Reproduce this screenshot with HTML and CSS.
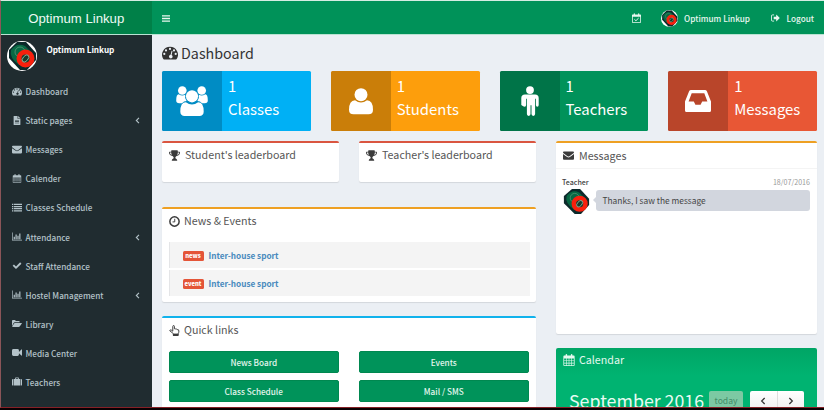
FILE: index.html
```html
<!DOCTYPE html>
<html lang="en">
<head>
<meta charset="utf-8">
<title>Optimum Linkup</title>
<link rel="stylesheet" href="styles.css">
</head>
<body>
<svg class="sprite" aria-hidden="true">
  <symbol id="gauge" viewBox="0 0 16 14"><path fill-rule="evenodd" d="M8 .8a8 8 0 0 0-6.700 12.300q.2.4.7.4h12q.5 0 .7-.4A8 8 0 0 0 8 .8zM3.400 7.900a1.100 1.100 0 1 1-2.200 0 1.100 1.100 0 0 1 2.200 0zM5.100 4.400a1.100 1.100 0 1 1-2.200 0 1.100 1.100 0 0 1 2.200 0zM9.100 2.900a1.100 1.100 0 1 1-2.200 0 1.100 1.100 0 0 1 2.200 0zM13.100 4.400a1.100 1.100 0 1 1-2.200 0 1.100 1.100 0 0 1 2.200 0zM14.800 7.900a1.100 1.100 0 1 1-2.200 0 1.100 1.100 0 0 1 2.200 0zM9.600 4.800l.9.3-.9 3.900a1.800 1.800 0 1 1-1-.2z"/></symbol>
  <symbol id="file" viewBox="0 0 14 16"><path fill-rule="evenodd" d="M1.500 0H8v5h5v10q0 1-1 1H2q-1 0-1-1V.5zM9 0l4 4H9zM3.500 7v1h7V7zm0 2.500v1h7v-1zm0 2.500v1h7v-1z"/></symbol>
  <symbol id="mail" viewBox="0 0 16 14"><path d="M0 2.200Q0 1 1.300 1h13.400Q16 1 16 2.200q0 1.100-1.300 2L9.400 8q-1.400 1-2.800 0L1.300 4.200Q0 3.300 0 2.200z"/><path d="M0 4.900l6 4.200q2 1.300 4 0l6-4.200v7q0 1.300-1.300 1.300H1.300Q0 13.200 0 11.900z"/></symbol>
  <symbol id="cal" viewBox="0 0 15 16"><path fill-rule="evenodd" d="M1.200 2H3V1q0-1 1-1t1 1v1h5V1q0-1 1-1t1 1v1h1.800q1.200 0 1.200 1.200v11.600q0 1.200-1.200 1.200H1.200Q0 16 0 14.800V3.200Q0 2 1.200 2zM1 6v2.500h2.500V6zm3.300 0v2.500H7.100V6zm3.600 0v2.500h2.800V6zm3.600 0v2.500H14V6zM1 9.200v2.600h2.500V9.200zm3.300 0v2.600h2.800V9.200zm3.600 0v2.600h2.800V9.200zm3.600 0v2.600H14V9.200zM1 12.600V15h2.500v-2.400zm3.300 0V15h2.800v-2.400zm3.600 0V15h2.800v-2.400zm3.600 0V15H14v-2.400z"/></symbol>
  <symbol id="list" viewBox="0 0 16 14"><path d="M0 1h2.200v2H0zm3.200 0H16v2H3.200zM0 4.400h2.200v2H0zm3.200 0H16v2H3.200zM0 7.800h2.200v2H0zm3.200 0H16v2H3.200zM0 11.200h2.200v2H0zm3.200 0H16v2H3.200z"/></symbol>
  <symbol id="chart" viewBox="0 0 18 14"><path d="M0 0h1.200v12.800H18V14H0zM3 7.500h2.200V12H3zm3.300-4h2.200V12H6.300zm3.400 2h2.200V12H9.700zM13 1.500h2.200V12H13z"/></symbol>
  <symbol id="check" viewBox="0 0 16 14"><path d="M1 7.300l2.100-2.100 3.300 3.300L13 1.900 15.100 4l-8.700 8.700z"/></symbol>
  <symbol id="folder" viewBox="0 0 17 14"><path d="M0 11.500V2.600Q0 1 1.500 1h3.200q1.500 0 1.500 1.600h5.300q1.600 0 1.600 1.700V5H5Q3.500 5 2.400 6.600z"/><path d="M4.900 6.200h11.300q1.100 0 .5 1l-3.300 4.600q-.8 1.200-2 1.200H1.100q-1.200 0-.4-1.200l2.500-4.400q.7-1.200 1.700-1.200z"/></symbol>
  <symbol id="video" viewBox="0 0 16 14"><path d="M2.300 1.500h6.500q2.300 0 2.300 2.300V6L15 2.200q1-.7 1 .5v8.600q0 1.200-1 .5L11.100 8v2.200q0 2.300-2.300 2.300H2.300Q0 12.500 0 10.200V3.800q0-2.300 2.300-2.300z"/></symbol>
  <symbol id="case" viewBox="0 0 16 14"><path fill-rule="evenodd" d="M3.200 3h1.700V1.600Q4.900.5 6 .5h4q1.100 0 1.100 1.100V3h1.700v10.500H3.200zm3-1.300V3h3.600V1.700zM2.300 3v10.500h-.8Q0 13.500 0 12V4.600Q0 3 1.500 3zm11.400 0h.8Q16 3 16 4.600V12q0 1.500-1.500 1.500h-.8z"/></symbol>
  <symbol id="angle" viewBox="0 0 8 12"><path d="M6.500 1.500L2 6l4.500 4.500" fill="none" stroke="currentColor" stroke-width="1.900"/></symbol>
  <symbol id="bars" viewBox="0 0 14 12"><path d="M0 .5h14v2.200H0zm0 4.400h14v2.200H0zm0 4.400h14v2.200H0z"/></symbol>
  <symbol id="calcheck" viewBox="0 0 14 15"><path fill-rule="evenodd" d="M1 2h1.700V.8q0-.8.9-.8t.9.8V2h5V.8q0-.8.9-.8t.9.8V2H13q1 0 1 1v11q0 1-1 1H1q-1 0-1-1V3q0-1 1-1zm.2 3.500v8.300h11.600V5.500z"/><path d="M3.700 9.500l2.400 2.300 4.300-4.300" fill="none" stroke="currentColor" stroke-width="1.500"/></symbol>
  <symbol id="out" viewBox="0 0 16 14"><path d="M5.500 1.500H2.700Q.8 1.500.8 3.400v7.200q0 1.900 1.900 1.900h2.800" fill="none" stroke="currentColor" stroke-width="1.600"/><path d="M4.800 4.600h4.400V1.700q0-.8.7-.3l5.300 5.100q.5.500 0 1l-5.300 5.100q-.7.500-.7-.3V9.400H4.800z"/></symbol>
  <symbol id="users" viewBox="0 0 32 30"><circle cx="6.300" cy="4.500" r="4.300"/><circle cx="25.700" cy="4.500" r="4.300"/><path d="M9.200 8.700q-.8 3.400 1.400 6.300-2.800.1-4.600 2.300H3.300Q.2 17.300.2 14.500q0-6.200 2.500-6.200 3.500 2.200 6.500.4zM22.800 8.700q.8 3.400-1.400 6.300 2.800.1 4.600 2.300h2.700q3.100 0 3.100-2.800 0-6.200-2.500-6.200-3.500 2.200-6.500.4z"/><circle cx="16" cy="10.300" r="6.100"/><path d="M9.900 16.200q6.100 4.500 12.200 0 5.600 0 5.600 9.400 0 4.400-4.400 4.400H8.700q-4.400 0-4.400-4.400 0-9.400 5.600-9.400z"/></symbol>
  <symbol id="user" viewBox="0 0 24 27"><circle cx="12" cy="6.700" r="6.500"/><path d="M6 12.200q6 4.500 12 0 6 .3 6 9.500 0 4.600-4.500 4.600h-15Q0 26.300 0 21.700q0-9.200 6-9.500z"/></symbol>
  <symbol id="male" viewBox="0 0 18 30"><circle cx="9" cy="4.100" r="3.900"/><path d="M4 8.400h10q3.700 0 3.700 3.700v7q0 1.600-1.400 1.600t-1.400-1.600v-6.300h-.8v15.300q0 1.800-1.800 1.800t-1.800-1.800v-8.900h-1v8.900q0 1.800-1.800 1.800t-1.800-1.800V12.800h-.8v6.300q0 1.600-1.400 1.600T.3 19.100v-7Q.3 8.400 4 8.400z"/></symbol>
  <symbol id="inbox" viewBox="0 0 26 22"><path fill-rule="evenodd" d="M6 0h14q1.300 0 1.900 1.300L26 11.500V20.500Q26 22 24.500 22h-23Q0 22 0 20.500v-9L4.100 1.300Q4.700 0 6 0zm.7 3.300L3.600 11.500h5.200l1.600 3.300h5.200l1.600-3.300h5.200L19.300 3.300z"/></symbol>
  <symbol id="trophy" viewBox="0 0 16 15"><path fill-rule="evenodd" d="M4 0h8q.8 0 .8.800V2h2.400q.8 0 .8.800 0 4.800-5 5.500-1.500 1.400-1.700 1.700-.5 2 1 2.300 1.700.5 1.700 2.700H4q0-2.200 1.700-2.700 1.500-.3 1-2.300Q6.500 9.700 5 8.300 0 7.600 0 2.800 0 2 .8 2h2.400V.8Q3.200 0 4 0zM1.200 3.200q.2 2.900 3 3.700-.9-1.500-1-3.700zm13.600 0h-2q-.1 2.200-1 3.700 2.800-.8 3-3.700z"/></symbol>
  <symbol id="clock" viewBox="0 0 14 14"><circle cx="7" cy="7" r="5.900" fill="none" stroke="currentColor" stroke-width="1.900"/><path d="M7.300 3.500v4H4.500" fill="none" stroke="currentColor" stroke-width="1.200"/></symbol>
  <symbol id="hand" viewBox="0 0 15 16"><path d="M5 9V2.300Q5 .8 6.200.8t1.200 1.500V5.500q1.300-.5 2 .5 1.300-.4 2 .6 2.500-.4 2.500 2.200 0 2-1 3.900v2.500H5.800v-2.500Q4.300 11 1.200 9 .2 8 1.200 7.200 2.500 6.600 5 9z" fill="none" stroke="currentColor" stroke-width="1.400"/><path d="M5.500 12.500h7.400V16H5.500z"/></symbol>
  <symbol id="logo" viewBox="0 0 30 30"><circle class="disc" cx="15" cy="15" r="15"/><path d="M10 1h9l10 11v7L20 29h-7L2 17V9z" fill="#0c2a2b"/><path d="M4 9q6-8 14-4l6 6-12 13Q2 17 4 9z" fill="#086844"/><circle cx="13" cy="11" r="5" fill="none" stroke="#62a080" stroke-width=".7"/><circle cx="18.500" cy="17.500" r="6.500" fill="#163c2c" stroke="#f8200d" stroke-width="5"/><ellipse cx="18.500" cy="17.500" rx="2.500" ry="4.200" transform="rotate(40 18.500 17.500)" fill="none" stroke="#8fb49d" stroke-width=".9"/></symbol>
  <symbol id="logo-plain" viewBox="0 0 30 30"><path d="M10 1h9l10 11v7L20 29h-7L1 17V9z" fill="#0c2a2b"/><path d="M4 9q6-8 14-4l6 6-12 13Q2 17 4 9z" fill="#086844"/><circle cx="13" cy="11" r="5" fill="none" stroke="#62a080" stroke-width=".7"/><circle cx="18.500" cy="17.500" r="6.500" fill="#163c2c" stroke="#f8200d" stroke-width="5"/><ellipse cx="18.500" cy="17.500" rx="2.500" ry="4.200" transform="rotate(40 18.500 17.500)" fill="none" stroke="#8fb49d" stroke-width=".9"/></symbol>
</svg>
<div class="screen">
  <header class="topbar">
    <div class="brand">Optimum Linkup</div>
    <nav class="topnav">
      <svg class="i-bars"><use href="#bars"/></svg>
      <svg class="i-calcheck"><use href="#calcheck"/></svg>
      <svg class="avatar-sm"><use href="#logo"/></svg>
      <span class="top-user">Optimum Linkup</span>
      <svg class="i-out"><use href="#out"/></svg>
      <span class="top-logout">Logout</span>
    </nav>
  </header>
  <div class="body">
    <aside class="sidebar">
      <div class="profile"><svg><use href="#logo"/></svg><span>Optimum Linkup</span></div>
      <ul class="menu">
        <li><svg><use href="#gauge"/></svg><span>Dashboard</span></li>
        <li><svg><use href="#file"/></svg><span>Static pages</span><svg class="angle"><use href="#angle"/></svg></li>
        <li><svg><use href="#mail"/></svg><span>Messages</span></li>
        <li><svg><use href="#cal"/></svg><span>Calender</span></li>
        <li><svg><use href="#list"/></svg><span>Classes Schedule</span></li>
        <li><svg><use href="#chart"/></svg><span>Attendance</span><svg class="angle"><use href="#angle"/></svg></li>
        <li><svg><use href="#check"/></svg><span>Staff Attendance</span></li>
        <li><svg><use href="#chart"/></svg><span>Hostel Management</span><svg class="angle"><use href="#angle"/></svg></li>
        <li><svg><use href="#folder"/></svg><span>Library</span></li>
        <li><svg><use href="#video"/></svg><span>Media Center</span></li>
        <li><svg><use href="#case"/></svg><span>Teachers</span></li>
      </ul>
    </aside>
    <main class="content">
      <h1><svg><use href="#gauge"/></svg><span>Dashboard</span></h1>
      <section class="stats">
        <div class="stat blue"><div class="stat-icon"><svg class="s-users"><use href="#users"/></svg></div><div class="stat-text"><b>1</b><b>Classes</b></div></div>
        <div class="stat orange"><div class="stat-icon"><svg class="s-user"><use href="#user"/></svg></div><div class="stat-text"><b>1</b><b>Students</b></div></div>
        <div class="stat green"><div class="stat-icon"><svg class="s-male"><use href="#male"/></svg></div><div class="stat-text"><b>1</b><b>Teachers</b></div></div>
        <div class="stat red"><div class="stat-icon"><svg class="s-inbox"><use href="#inbox"/></svg></div><div class="stat-text"><b>1</b><b>Messages</b></div></div>
      </section>
      <div class="columns">
        <div class="left">
          <div class="boards">
            <section class="box danger"><h2><svg><use href="#trophy"/></svg><span>Student's leaderboard</span></h2></section>
            <section class="box danger"><h2><svg><use href="#trophy"/></svg><span>Teacher's leaderboard</span></h2></section>
          </div>
          <section class="box warning news">
            <h2><svg><use href="#clock"/></svg><span>News &amp; Events</span></h2>
            <ul>
              <li><em>news</em><a>Inter-house sport</a></li>
              <li><em>event</em><a>Inter-house sport</a></li>
            </ul>
          </section>
          <section class="box info quick">
            <h2><svg><use href="#hand"/></svg><span>Quick links</span></h2>
            <div class="links"><a>News Board</a><a>Events</a><a>Class Schedule</a><a>Mail / SMS</a></div>
          </section>
        </div>
        <div class="right">
          <section class="box warning messages">
            <h2><svg><use href="#mail"/></svg><span>Messages</span></h2>
            <div class="meta"><strong>Teacher</strong><time>18/07/2016</time></div>
            <div class="chat"><svg><use href="#logo-plain"/></svg><p>Thanks, I saw the message</p></div>
          </section>
          <section class="calendar">
            <h2><svg><use href="#cal"/></svg><span>Calendar</span></h2>
            <div class="cal-bar">
              <span class="month">September 2016</span>
              <span class="today">today</span>
              <span class="pager"><i><svg><use href="#angle"/></svg></i><i><svg class="flip"><use href="#angle"/></svg></i></span>
            </div>
          </section>
        </div>
      </div>
    </main>
  </div>
</div>
</body>
</html>
```
FILE: styles.css
```css
* { box-sizing: border-box; margin: 0; padding: 0; }
body {
  width: 824px; height: 410px; overflow: hidden; background: #080002;
  font-family: "Noto Sans CJK SC", "Open Sans", sans-serif; color: #444;
}
svg { fill: currentColor; flex: none; display: block; }
.sprite { position: absolute; width: 0; height: 0; }
.disc { fill: #fff; }
ul { list-style: none; }
.screen {
  height: 408px; overflow: hidden; display: flex; flex-direction: column;
  border-top: 1px solid #d5ede3; border-left: 1px solid #8b5558; border-bottom: 1px solid #862026;
}
.topbar { height: 34px; flex: none; display: flex; color: #e9f7f0; border-bottom: 1px solid #b9e3d2; background: #009259; }
.brand {
  width: 151px; background: #008048; color: #eefaf5; text-align: center; padding-top: 1px;
  font: 13.200px/33px "Liberation Sans", Arial, sans-serif;
}
.topnav { flex: 1; display: flex; align-items: center; padding: 1px 10px 0; font-size: 8.200px; line-height: 12px; font-weight: 500; }
.i-bars { width: 8px; height: 7px; }
.i-calcheck { width: 9px; height: 10px; margin-left: 462px; }
.avatar-sm { width: 17px; height: 17px; margin-left: 20px; }
.top-user { width: 66px; margin-left: 6.500px; white-space: nowrap; }
.i-out { width: 9px; height: 8px; margin-left: 20.500px; }
.top-logout { margin-left: 7px; white-space: nowrap; }

.body { flex: 1; min-height: 0; display: flex; }
.sidebar { width: 151px; background: #202c30; color: #b4c3c9; flex: none; }
.profile { display: flex; height: 41.500px; padding: 6px 0 0 6px; color: #fff; font-size: 8.200px; line-height: 16px; font-weight: 700; }
.profile svg { width: 30px; height: 30px; margin-right: 9.500px; }
.profile span { white-space: nowrap; }
.menu li { height: 29.100px; display: flex; align-items: center; padding: 0 11px; font-size: 8.200px; line-height: 12px; font-weight: 500; }
.menu li svg { width: 10px; height: 9px; margin-right: 3.500px; }
.menu li span { flex: 1; white-space: nowrap; }
.menu li svg.angle { width: 5px; height: 7px; margin: 1px 1px 0 0; }

.content { flex: 1; min-width: 0; background: #ebeff4; padding: 0 7px 0 10px; overflow: hidden; }
h1 { height: 36px; display: flex; align-items: center; font-size: 14.300px; line-height: 20px; font-weight: 400; color: #333; }
h1 svg { width: 16px; height: 14px; margin-right: 3px; }
.stats { display: grid; grid-template-columns: repeat(4, 1fr); gap: 20px; margin-bottom: 10px; }
.stat { height: 60px; display: flex; border-radius: 1.500px; overflow: hidden; color: #fff; }
.stat-icon { width: 60px; display: flex; align-items: center; justify-content: center; background: rgba(0,0,0,.2); }
.stat-text { padding: 3px 0 0 6px; }
.stat-text b { display: block; font-weight: 400; font-size: 14.900px; line-height: 23px; }
.s-users { width: 32px; height: 30px; }
.s-user { width: 24px; height: 27px; }
.s-male { width: 18px; height: 30px; }
.s-inbox { width: 26px; height: 22px; }
.blue { background: #00b0f5; }
.orange { background: #fd9e0c; }
.green { background: #00925a; }
.red { background: #e85735; }

.columns { display: grid; grid-template-columns: 374px 261px; gap: 20px; }
.boards { display: grid; grid-template-columns: 177px 177px; gap: 20px; margin-bottom: 25px; }
.box { background: #fff; border-top: 2px solid; border-radius: 2px; box-shadow: 0 1px 1px rgba(0,0,0,.1); }
.danger { border-color: #da5540; height: 41px; }
.warning { border-color: #eea023; }
.info { border-color: #10b2ec; }
h2 { display: flex; align-items: center; height: 24px; padding-left: 7px; font-size: 10.700px; line-height: 16px; font-weight: 400; color: #555; white-space: nowrap; }
h2 svg { width: 11px; height: 11px; margin-right: 5px; color: #3b3b3b; }
.news { height: 95px; margin-bottom: 14px; padding: 0 6.500px; }
.news h2 { margin-left: -6.500px; margin-bottom: 9px; }
.news h2 svg, .quick h2 svg { margin-right: 4px; }
.news li { height: 26px; margin-bottom: 2px; display: flex; align-items: center; background: #f4f4f4; border-left: 1.500px solid #e4e5e7; padding-left: 13px; }
.news em { width: 21px; height: 10px; margin: 2px 5px 0 0; border-radius: 1.500px; background: #e45538; color: #fff; font: 900 5.900px/9px "Noto Sans CJK SC", sans-serif; text-align: center; }
.news a { color: #4789bd; font-size: 8.200px; line-height: 12px; font-weight: 700; }
.quick { height: 100px; }
.links { display: grid; grid-template-columns: 170.500px 170.500px; gap: 7px 19.500px; padding: 9px 0 0 6.500px; }
.links a { height: 22px; background: #00935a; border: 1px solid #008850; border-radius: 2px; color: #e4f6ee; text-align: center; font-size: 8.200px; line-height: 20px; font-weight: 500; }

.messages { height: 193px; margin-bottom: 14px; }
.messages h2 { border-bottom: 1px solid #f4f4f4; height: 26px; }
.meta { display: flex; justify-content: space-between; padding: 7px 7px 0 6px; font-size: 7.100px; line-height: 12px; }
.meta strong { font-weight: 500; }
.meta time { color: #999; }
.chat { display: flex; padding: 0 7px; }
.chat svg { width: 27px; height: 27px; margin-right: 6px; }
.chat p { position: relative; flex: 1; height: 21px; margin-top: 2px; padding-left: 6.500px; background: #d2d6de; border-radius: 3px; font-size: 8.400px; line-height: 21px; }
.chat p::before { content: ""; position: absolute; left: -3px; top: 7px; border: 3px solid transparent; border-left: 0; border-right-color: #d2d6de; }
.calendar { height: 80px; border-radius: 2px; background: linear-gradient(#00a565, #00b371 35%); color: #dff7ec; }
.calendar h2, .calendar h2 svg { color: #e4f9ef; }
.calendar h2 svg { height: 12px; width: 12px; margin-right: 4px; }
.cal-bar { display: flex; align-items: flex-start; padding: 19px 0 0 13px; }
.month { width: 140px; margin-top: -2px; font-size: 17.800px; line-height: 23px; color: #e8fbf2; white-space: nowrap; }
.today { width: 34px; height: 20px; border-radius: 2px; background: #7cc9a3; color: #438c68; font-size: 8.600px; line-height: 19px; text-align: center; }
.pager { display: flex; margin-left: 7px; width: 54px; height: 20px; border-radius: 2px; background: linear-gradient(#fff, #eee); color: #333; }
.pager i { flex: 1; display: flex; align-items: center; justify-content: center; }
.pager i + i { border-left: 1px solid #ddd; }
.pager svg { width: 6px; height: 8px; }
.flip { transform: scaleX(-1); }
```
